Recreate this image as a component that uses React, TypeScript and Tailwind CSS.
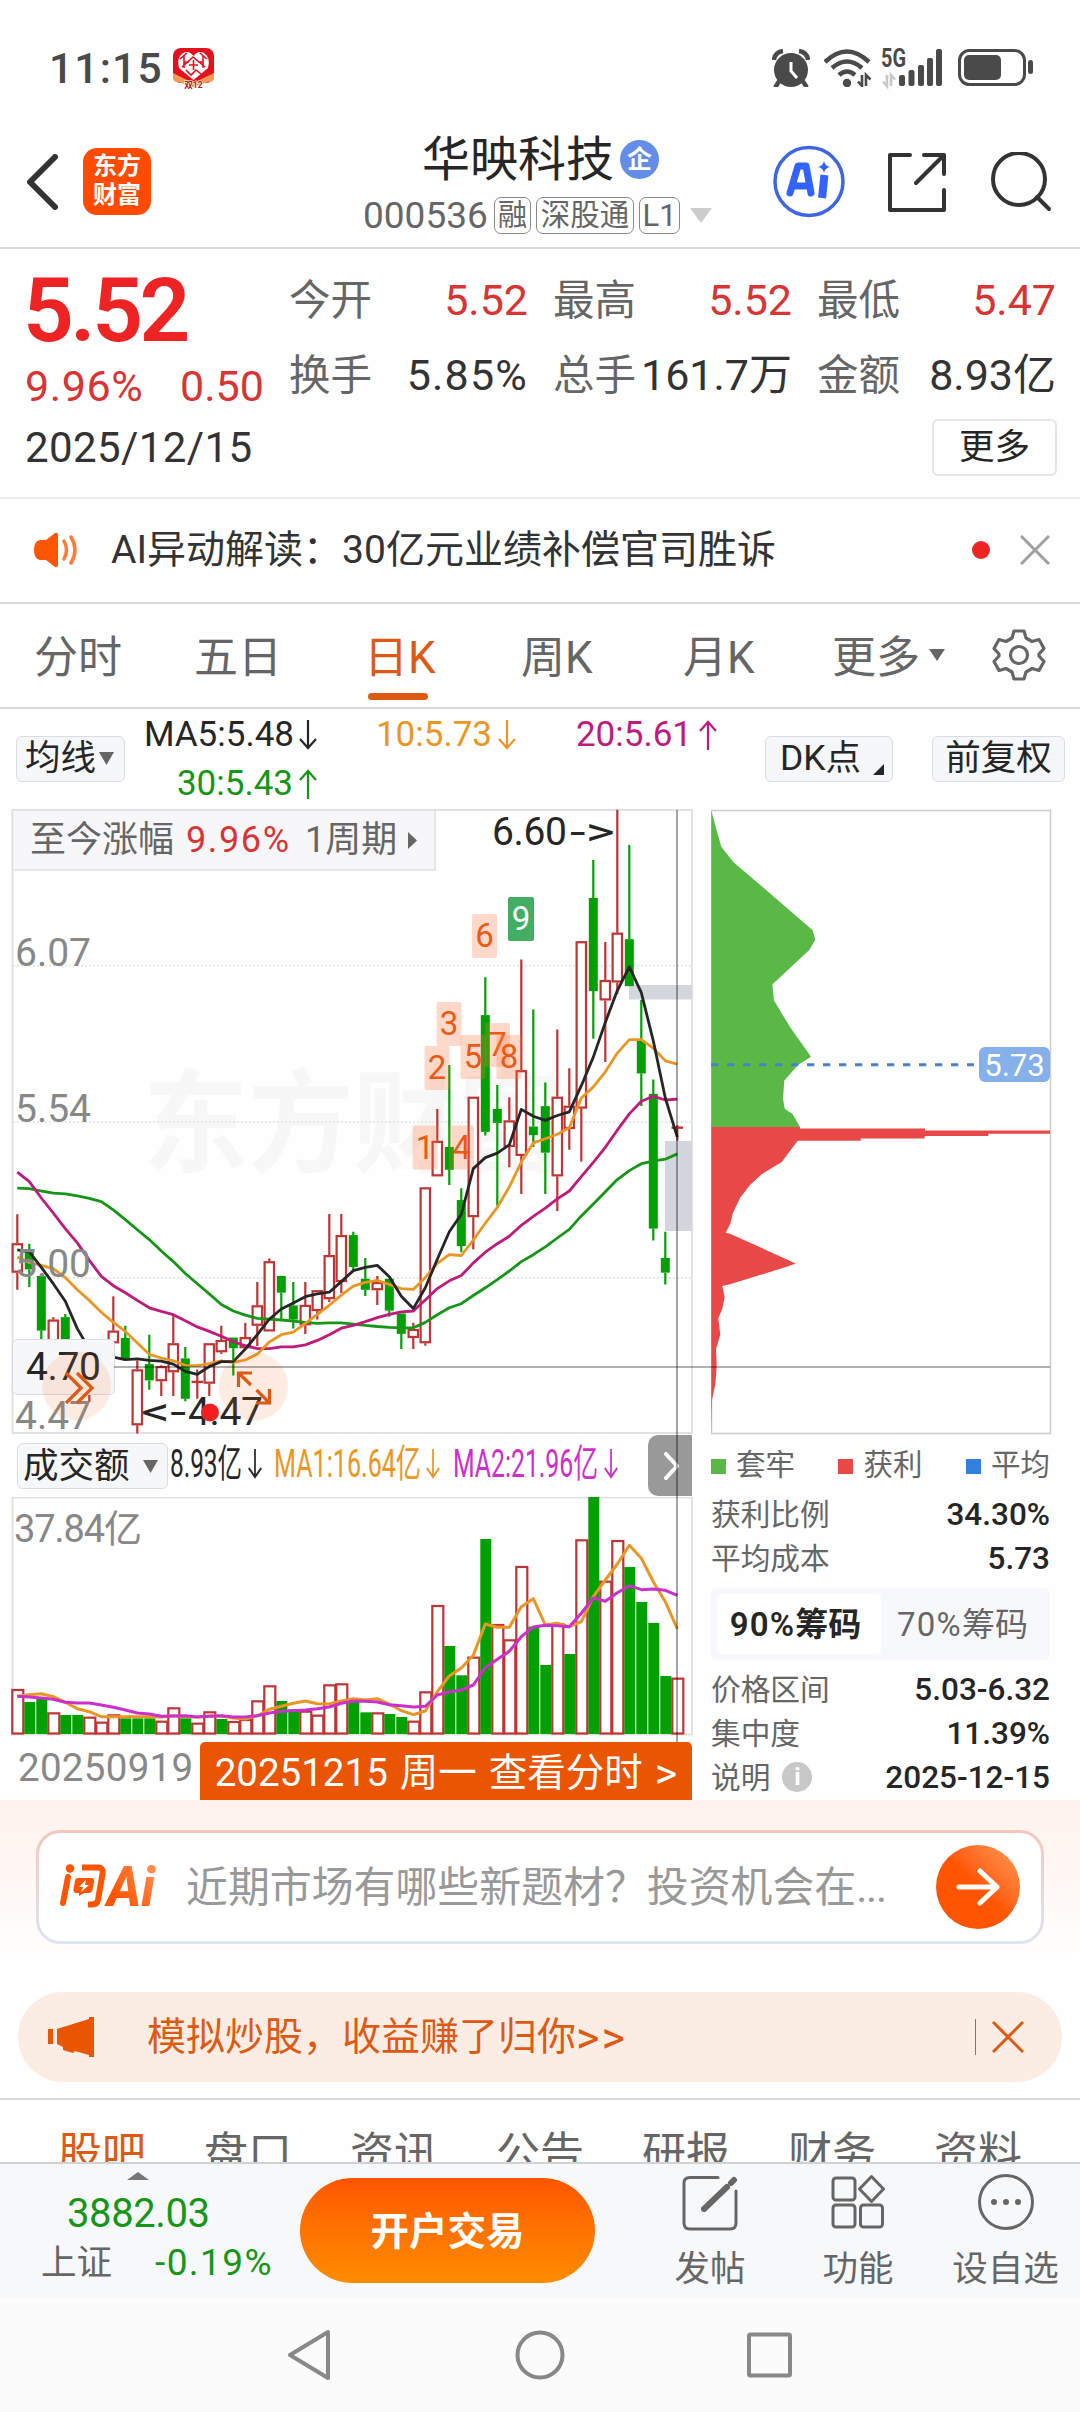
import React from 'react';

type Bar = [kind: 'r' | 'g', high: number, top: number, bottom: number, low: number];

const STEP = 12;
const FIRST = 17.3;
const xAt = (i: number) => FIRST + STEP * i;
// chart data is stored in fine-grained units, these bring it to pixels
const priceY = (v: number) => v / 2.45 - 8;
const volY = (v: number) => v / 3 - 67;
const chipX = (v: number) => v / 3 - 21;
const chipY = (v: number) => v / 2.119 - 108;

const candles: Bar[] = [
  ['r', 1015, 1086, 1158, 1200], ['g', 1087, 1104, 1150, 1193], ['g', 1166, 1166, 1300, 1325], ['r', 1267, 1273, 1335, 1335],
  ['g', 1259, 1267, 1345, 1360], ['g', 1345, 1360, 1400, 1440], ['r', 1350, 1380, 1440, 1475], ['g', 1345, 1360, 1400, 1430],
  ['r', 1216, 1300, 1331, 1331], ['g', 1288, 1318, 1368, 1372], ['r', 1374, 1395, 1532, 1552], ['g', 1310, 1382, 1422, 1445],
  ['r', 1385, 1387, 1424, 1460], ['r', 1262, 1331, 1402, 1460], ['g', 1340, 1368, 1467, 1473], ['r', 1395, 1423, 1423, 1467],
  ['r', 1331, 1331, 1430, 1460], ['r', 1288, 1323, 1353, 1357], ['g', 1317, 1317, 1343, 1410], ['r', 1281, 1316, 1343, 1343],
  ['r', 1181, 1238, 1288, 1338], ['r', 1123, 1130, 1302, 1302], ['g', 1166, 1166, 1207, 1275], ['g', 1181, 1238, 1273, 1295],
  ['r', 1181, 1237, 1287, 1308], ['r', 1201, 1201, 1252, 1273], ['r', 1014, 1115, 1223, 1230], ['r', 1014, 1066, 1181, 1208],
  ['g', 1058, 1066, 1144, 1152], ['g', 1122, 1173, 1200, 1215], ['r', 1166, 1181, 1201, 1237], ['g', 1173, 1173, 1251, 1266],
  ['g', 1258, 1258, 1308, 1345], ['r', 1281, 1296, 1318, 1345], ['r', 949, 949, 1331, 1337], ['r', 757, 835, 922, 922],
  ['g', 649, 850, 906, 943], ['g', 951, 980, 1093, 1108], ['r', 727, 727, 1022, 1101], ['g', 434, 527, 813, 822],
  ['g', 698, 757, 791, 994], ['r', 728, 785, 850, 900], ['r', 391, 662, 872, 965], ['g', 513, 800, 821, 850],
  ['g', 692, 750, 864, 965], ['r', 562, 727, 922, 1007], ['r', 657, 749, 806, 857], ['r', 346, 346, 756, 886],
  ['g', 147, 240, 468, 585], ['r', 348, 441, 491, 642], ['r', 24, 325, 447, 475], ['g', 110, 341, 456, 456],
  ['g', 490, 590, 670, 750], ['g', 685, 720, 1050, 1079], ['g', 1058, 1122, 1158, 1187], ['r', 797, 800, 800, 835],
];

const ma5 = [1102, 1107, 1145, 1185, 1228, 1295, 1345, 1355, 1365, 1371, 1369, 1373, 1375, 1382, 1400, 1407, 1388, 1376, 1376, 1345, 1310, 1272, 1247, 1232, 1217, 1210, 1206, 1180, 1153, 1145, 1140, 1168, 1216, 1246, 1195, 1125, 1058, 1015, 903, 876, 865, 845, 758, 775, 785, 773, 764, 700, 630, 545, 467, 409, 472, 590, 730, 826];
const ma10 = [1120, 1133, 1140, 1148, 1170, 1200, 1226, 1255, 1280, 1302, 1330, 1358, 1367, 1374, 1385, 1386, 1381, 1374, 1378, 1372, 1357, 1328, 1310, 1304, 1282, 1260, 1238, 1213, 1191, 1182, 1177, 1187, 1197, 1199, 1170, 1135, 1114, 1116, 1078, 1037, 998, 948, 887, 840, 830, 819, 803, 730, 703, 666, 620, 587, 587, 608, 639, 647];
const ma20 = [912, 935, 975, 1012, 1050, 1085, 1128, 1167, 1190, 1207, 1226, 1244, 1253, 1261, 1276, 1291, 1302, 1314, 1327, 1337, 1344, 1344, 1340, 1340, 1335, 1324, 1310, 1294, 1287, 1278, 1268, 1260, 1254, 1252, 1225, 1197, 1178, 1165, 1134, 1108, 1087, 1069, 1042, 1020, 1000, 977, 958, 923, 888, 851, 809, 769, 738, 726, 735, 733];
const ma30 = [951, 952, 958, 963, 965, 970, 976, 984, 1004, 1028, 1053, 1077, 1105, 1131, 1160, 1185, 1210, 1236, 1252, 1262, 1270, 1272, 1274, 1277, 1280, 1282, 1281, 1281, 1284, 1287, 1290, 1292, 1293, 1293, 1280, 1261, 1244, 1234, 1214, 1195, 1175, 1154, 1131, 1114, 1095, 1073, 1052, 1019, 990, 960, 930, 908, 891, 885, 880, 867];

const volumes = [777, 816, 804, 847, 855, 855, 860, 875, 853, 865, 865, 865, 872, 832, 865, 878, 844, 867, 873, 867, 811, 766, 813, 838, 842, 854, 763, 760, 813, 847, 847, 852, 861, 872, 784, 525, 648, 736, 680, 327, 582, 628, 408, 590, 705, 580, 672, 328, 201, 452, 330, 411, 516, 579, 738, 743];
const volumeKinds = 'rggrggrrrgggrrgrrgrrrrggrrrrggrggrrrggrgrrrggrgrgrrggggr';
const volMa1 = [799, 794, 791, 800, 817, 836, 845, 860, 860, 860, 860, 860, 861, 857, 860, 861, 858, 858, 864, 867, 857, 838, 829, 820, 813, 821, 822, 813, 806, 810, 806, 822, 842, 854, 843, 785, 738, 714, 676, 582, 592, 592, 530, 506, 585, 580, 590, 575, 500, 450, 402, 346, 385, 455, 515, 597];
const volMa2 = [799, 801, 804, 808, 817, 819, 819, 825, 832, 840, 849, 852, 859, 858, 857, 861, 859, 857, 861, 861, 857, 849, 844, 842, 840, 836, 831, 820, 813, 814, 816, 824, 827, 831, 829, 795, 785, 780, 765, 713, 688, 664, 620, 591, 586, 587, 590, 550, 504, 514, 488, 467, 479, 477, 481, 496];

const trapped = [[64, 235], [94, 311], [130, 343], [368, 488], [376, 508], [358, 530], [247, 603], [252, 637], [300, 693], [363, 756], [325, 773], [283, 806], [279, 845], [284, 866], [308, 878], [330, 905], [64, 905]];
const profit = [[64, 905], [330, 905], [330, 908], [705, 908], [705, 912], [1080, 912], [1080, 919], [895, 919], [895, 924], [704, 924], [704, 929], [512, 929], [512, 934], [323, 934], [275, 979], [215, 1005], [180, 1028], [150, 1055], [128, 1088], [121, 1110], [107, 1129], [120, 1131], [317, 1194], [290, 1201], [120, 1238], [97, 1242], [104, 1265], [97, 1290], [85, 1310], [91, 1345], [78, 1375], [80, 1412], [76, 1450], [66, 1483], [64, 1553]];

const line = (data: number[], toY: (v: number) => number) =>
  data.map((v, i) => `${xAt(i).toFixed(1)},${toY(v).toFixed(1)}`).join(' ');
const area = (pts: number[][]) => pts.map(([x, y]) => `${chipX(x).toFixed(1)},${chipY(y).toFixed(1)}`).join(' ');

const counts = [
  { n: '6', x: 472, y: 106 }, { n: '3', x: 436.5, y: 194 }, { n: '2', x: 424.5, y: 238 },
  { n: '5', x: 460.5, y: 227 }, { n: '7', x: 485, y: 215 }, { n: '8', x: 496.5, y: 227 },
  { n: '1', x: 412.5, y: 317.5 }, { n: '4', x: 449, y: 317.5 },
];

const Arrow: React.FC<{ up?: boolean; className?: string }> = ({ up, className = 'w-[18px]' }) => (
  <svg viewBox="0 0 18 30" preserveAspectRatio="none" className={`h-[30px] ${className}`} fill="none" stroke="currentColor" strokeWidth="2.2">
    <path d={up ? 'M9 30V2M1 11L9 2L17 11' : 'M9 0V28M1 19L9 28L17 19'} />
  </svg>
);

const StatusBar = () => (
  <div className="flex h-[112px] items-start justify-between pl-[49px] pr-[46px] pt-[48px] text-[#4a4a4a]">
    <div className="flex items-center">
      <span className="w-[124px] text-[42.5px] font-medium leading-[39px] tracking-[1.2px]">11:15</span>
      <svg width="41" height="41" viewBox="0 0 41 41" className="overflow-visible">
        <rect width="41" height="35" rx="8" fill="#e5101b" />
        <path d="M0 25L20 35L41 25V30Q41 34 35 34L20 39L5 34Q0 34 0 30Z" fill="#f59a55" />
        <path d="M20.500 32L6 20Q3 10 10 5Q16 2 20.500 8Q25 2 31 5Q38 10 35 20Z" fill="#fff" />
        <path d="M7 11L14 5M9 19L20 9L32 19M27 5L34 11M11 14H16M25 14H30M13 22L18 27L23 22L28 26M20.500 12V22M16 17H25M11 8V20M30 8V20" stroke="#e5101b" strokeWidth="1.600" fill="none" />
        <text x="20.500" y="40" textAnchor="middle" fontSize="8.500" fontWeight="700" fill="#b3131b" stroke="#fff" strokeWidth="1" paintOrder="stroke">双12</text>
      </svg>
    </div>
    <div className="flex items-start">
      <svg width="38" height="39" viewBox="0 0 38 39" fill="none" stroke="#4a4a4a">
        <circle cx="19" cy="22" r="17" fill="#4a4a4a" stroke="none" />
        <path d="M2 12Q3 4 11 3M36 12Q35 4 27 3" strokeWidth="4.500" />
        <path d="M8 32L4 38M30 32L34 38" strokeWidth="4.500" strokeLinecap="round" />
        <path d="M19 14V23L25 30" stroke="#fff" strokeWidth="3" />
      </svg>
      <svg width="49" height="39" viewBox="0 0 49 39" fill="none" stroke="#4a4a4a" strokeWidth="4.500" className="ml-[14px]">
        <path d="M1 14Q23 -7 45 14M8 20Q23 7 38 20M15 27Q23 20 31 27" />
        <circle cx="23" cy="35" r="4.200" fill="#4a4a4a" stroke="none" />
        <path d="M38 27V38L34 33.500M42 38V27L46.500 31.500" strokeWidth="2.600" />
      </svg>
      <svg width="62" height="39" viewBox="0 0 62 39" className="ml-[8px] overflow-visible">
        <text x="0" y="19" fontSize="26" fontWeight="700" fill="#4a4a4a" textLength="25" lengthAdjust="spacingAndGlyphs">5G</text>
        <path d="M6 27V38L2 33.500M10 38V27L14 31.500" stroke="#c8c8c8" strokeWidth="2.600" fill="none" />
        <g fill="#4a4a4a">
          <rect x="18" y="27" width="6" height="11" rx="2" />
          <rect x="27.500" y="22" width="6" height="16" rx="2" />
          <rect x="37" y="17" width="6" height="21" rx="2" />
          <rect x="46" y="10" width="6" height="28" rx="2" />
          <rect x="55" y="1" width="6" height="37" rx="2" />
        </g>
      </svg>
      <svg width="76" height="39" viewBox="0 0 76 39" className="ml-[15px]">
        <rect x="1.500" y="2.500" width="65" height="34" rx="10" fill="none" stroke="#4a4a4a" strokeWidth="3" />
        <rect x="6" y="7" width="37" height="25" rx="5" fill="#4a4a4a" />
        <rect x="70" y="12" width="5" height="14" rx="2.500" fill="#4a4a4a" />
      </svg>
    </div>
  </div>
);

const Tag: React.FC<{ children: React.ReactNode; width: string }> = ({ children, width }) => (
  <span className={`flex h-[37px] shrink-0 items-center justify-center whitespace-nowrap rounded-[7px] border border-[#8a8a8a] text-[29.5px] leading-none ${width}`}>{children}</span>
);

const Header = () => (
  <div className="flex h-[137px] items-start border-b-2 border-[#d8d8d8] pl-[27px]">
    <svg width="32" height="56" viewBox="0 0 32 56" className="mt-[42px]" fill="none" stroke="#333" strokeWidth="6" strokeLinecap="round" strokeLinejoin="round">
      <path d="M28 3L3 28L28 53" />
    </svg>
    <div className="ml-[24px] mt-[36px] flex h-[67px] w-[68px] flex-col items-center justify-center rounded-[14px] bg-[#ff4b00] text-[24px] font-bold leading-[29px] text-white">
      <span>东方</span>
      <span>财富</span>
    </div>
    <div className="ml-[212px] mt-[20px] flex w-[352px] flex-col">
      <div className="flex h-[56px] items-center pl-[59px]">
        <span className="w-[192px] whitespace-nowrap text-[48px] leading-[56px] text-[#262626]">华映科技</span>
        <span className="ml-[6px] flex size-[39px] items-center justify-center rounded-full bg-[#648de8] text-[25px] font-bold leading-none text-white">企</span>
      </div>
      <div className="mt-[9px] flex h-[37px] items-center gap-[5px] text-[#666]">
        <span className="w-[126px] shrink-0 text-[37px] leading-[37px]">000536</span>
        <Tag width="w-[37px]">融</Tag>
        <Tag width="w-[98px]">深股通</Tag>
        <Tag width="w-[41px]"><span className="text-[31px]">L1</span></Tag>
        <svg width="22" height="15" viewBox="0 0 22 15" className="ml-[5px] shrink-0"><path d="M0 0H22L11 15Z" fill="#ccc" /></svg>
      </div>
    </div>
    <svg width="72" height="74" viewBox="0 0 72 74" className="ml-[58px] mt-[32px]">
      <circle cx="36" cy="37.500" r="34" fill="#fff" stroke="#3f66e0" strokeWidth="3.500" />
      <path d="M17 49L25 22H33L38 49M22 42H35" stroke="#3363ff" strokeWidth="7" fill="none" strokeLinecap="round" strokeLinejoin="round" />
      <path d="M51 35L49.500 50" stroke="#3363ff" strokeWidth="8" strokeLinecap="square" />
      <path d="M51 17Q52 22 57 23Q52 24 51 29Q50 24 45 23Q50 22 51 17Z" fill="#3363ff" />
    </svg>
    <svg width="60" height="62" viewBox="0 0 60 62" className="ml-[42px] mt-[39px]" fill="none" stroke="#333" strokeWidth="4" strokeLinecap="round" strokeLinejoin="round">
      <path d="M23 4H3V59H57V39M37 4H57V23M57 4L29 32" />
    </svg>
    <svg width="64" height="64" viewBox="0 0 64 64" className="ml-[42px] mt-[40px]" fill="none" stroke="#333" strokeWidth="4" strokeLinecap="round">
      <circle cx="30" cy="27" r="26" />
      <path d="M48 45L60 57" />
    </svg>
  </div>
);

const Quote: React.FC<{ label: string; value: string; up?: boolean; className?: string }> = ({ label, value, up, className = '' }) => (
  <div className="flex h-[50px] w-[239px] items-center justify-between">
    <span className="whitespace-nowrap text-[41.5px] leading-none text-[#666]">{label}</span>
    <span className={`whitespace-nowrap text-[43px] leading-none ${up ? 'text-[#d93434]' : 'text-[#333]'} ${className}`}>{value}</span>
  </div>
);

const QuotePanel = () => (
  <div className="h-[250px] border-b-2 border-[#ebebeb] pl-[25px] pr-[23px]">
    <div className="flex">
      <div className="w-[264px] pt-[23px]">
        <div className="-ml-[2px] h-[78px] text-[89px] font-semibold leading-[78px] tracking-[-3.5px] text-[#ee2424]">5.52</div>
        <div className="mt-[11px] flex h-[50px] items-center text-[43px] leading-[50px] text-[#d93434]">
          <span className="w-[155px] tracking-[0.6px]">9.96%</span>
          <span>0.50</span>
        </div>
      </div>
      <div className="grid grid-cols-[239px_239px_239px] content-start gap-x-[25px] gap-y-[25px] pt-[27px]">
        <Quote label="今开" value="5.52" up />
        <Quote label="最高" value="5.52" up />
        <Quote label="最低" value="5.47" up />
        <Quote label="换手" value="5.85%" className="tracking-[1.2px]" />
        <Quote label="总手" value="161.7万" />
        <Quote label="金额" value="8.93亿" />
      </div>
    </div>
    <div className="mt-[8px] flex h-[58px] items-center justify-between">
      <span className="text-[42px] leading-none tracking-[0.4px] text-[#333]">2025/12/15</span>
      <span className="flex h-[57px] w-[125px] items-center justify-center rounded-[6px] border-2 border-[#e6e6e6] text-[35.5px] leading-none text-[#262626]">更多</span>
    </div>
  </div>
);

const Notice = () => (
  <div className="flex h-[105px] items-center border-b-2 border-[#d8d8d8] pl-[34px] pr-[30px]">
    <svg width="44" height="36" viewBox="0 0 44 36">
      <path d="M6 8H12L21 1Q24 0 24 4V32Q24 36 21 35L12 28H6Q0 27 0 18Q0 9 6 8Z" fill="#ff5500" />
      <path d="M30 9Q35 18 30 27M37 5Q45 18 37 31" stroke="#ff7a38" strokeWidth="3.500" fill="none" strokeLinecap="round" />
    </svg>
    <span className="ml-[33px] pt-[1px] text-[39px] leading-none text-[#333]">AI异动解读：30亿元业绩补偿官司胜诉</span>
    <span className="ml-auto size-[18px] rounded-full bg-[#ee2424]" />
    <svg width="30" height="30" viewBox="0 0 30 30" className="ml-[30px]" stroke="#a0a0a0" strokeWidth="3"><path d="M1 1L29 29M29 1L1 29" /></svg>
  </div>
);

const PeriodTabs = () => (
  <div className="flex h-[105px] items-center border-b-2 border-[#d8d8d8] pl-[34px] text-[44px] leading-none text-[#666]">
    <span className="w-[160px] pt-[5px]">分时</span>
    <span className="w-[170px] pt-[5px]">五日</span>
    <span className="relative w-[157px] pt-[5px] text-[#dc5a14]">
      日K
      <span className="absolute left-[4px] top-[62px] h-[7px] w-[60px] rounded-full bg-[#dc5a14]" />
    </span>
    <span className="w-[162px] pt-[5px]">周K</span>
    <span className="w-[149px] pt-[5px]">月K</span>
    <span className="pt-[5px]">更多</span>
    <svg width="16" height="12" viewBox="0 0 16 12" className="ml-[9px]"><path d="M0 0H16L8 12Z" fill="#666" /></svg>
    <svg width="54" height="54" viewBox="0 0 54 54" className="ml-[47px]" fill="none" stroke="#666" strokeWidth="3.200" strokeLinejoin="round">
      <path d="M22 3H32L34 10L40 13.500L47 11.500L52 20.500L47 26V28L52 33.500L47 42.500L40 40.500L34 44L32 51H22L20 44L14 40.500L7 42.500L2 33.500L7 28V26L2 20.500L7 11.500L14 13.500L20 10Z" />
      <circle cx="27" cy="27" r="8.500" />
    </svg>
  </div>
);

const pill = 'flex h-[46px] items-center whitespace-nowrap rounded-[6px] border border-[#d9dce2] bg-[#f6f7f9] text-[35.5px] leading-none text-[#262626]';

const IndicatorRow = () => (
  <div className="flex h-[100px] items-start pl-[16px]">
    <div className={`${pill} mt-[27px] w-[109px] pl-[8px]`}>
      均线
      <svg width="15" height="13" viewBox="0 0 15 13" className="ml-[3px]"><path d="M0 0H15L7.500 13Z" fill="#666" /></svg>
    </div>
    <div className="ml-[17px] grid grid-cols-[175px_199px_201px] gap-y-[1px] pt-[2px] text-[35px] leading-[48px]">
      <span className="flex items-center justify-end gap-[5px] text-[#262626]">MA5:5.48<Arrow /></span>
      <span className="flex items-center justify-end gap-[6px] text-[#eb9623]">10:5.73<Arrow /></span>
      <span className="flex items-center justify-end gap-[7px] text-[#bf1a7c]">20:5.61<Arrow up /></span>
      <span className="flex items-center justify-end gap-[6px] text-[#169616]">30:5.43<Arrow up /></span>
    </div>
    <div className={`${pill} ml-[48px] mt-[27px] w-[128px] pl-[14px]`}>
      DK点
      <svg width="11" height="11" viewBox="0 0 11 11" className="ml-[12px] mt-[22px]"><path d="M11 0V11H0Z" fill="#262626" /></svg>
    </div>
    <div className={`${pill} ml-[39px] mt-[27px] w-[133px] justify-center`}>前复权</div>
  </div>
);

const KLine = () => (
  <svg width="700" height="627" viewBox="0 0 700 627" className="block">
    <g fontSize="112" fontWeight="700" fill="#f7f7f7">
      <text x="143" y="356" textLength="420" lengthAdjust="spacingAndGlyphs">东方财富</text>
    </g>
    <g stroke="#e2e2e2" strokeWidth="1.500" strokeDasharray="2 2">
      <path d="M13 157.700H692M13 314H692M13 470H692" />
    </g>
    <path d="M12.500 2H692V625H12.500Z" fill="none" stroke="#e2e2e4" strokeWidth="2" />
    <rect x="629" y="177" width="63" height="14.500" fill="#d3d7dd" />
    <rect x="665" y="333" width="27" height="90" fill="#d3d7dd" />
    {candles.map(([kind, high, top, bottom, low], i) => {
      const x = xAt(i);
      const color = kind === 'r' ? '#bf3434' : '#02a002';
      return (
        <g key={i} stroke={color} strokeWidth="2.200">
          <path d={`M${x} ${priceY(high)}V${priceY(top)}M${x} ${priceY(bottom)}V${priceY(low)}`} />
          {kind === 'r' ? (
            <rect x={x - 4.7} y={priceY(top) + 1} width="9.400" height={Math.max(priceY(bottom) - priceY(top) - 2, 0.2)} fill="#fff" />
          ) : (
            <rect x={x - 4.5} y={priceY(top)} width="9" height={priceY(bottom) - priceY(top)} fill={color} stroke="none" />
          )}
        </g>
      );
    })}
    <g fontSize="33">
      {counts.map((c) => (
        <g key={c.n}>
          <rect x={c.x} y={c.y} width="25" height="44" rx="2" fill="#ff7b42" fillOpacity="0.28" />
          <text x={c.x + 12.5} y={c.y + 33} textAnchor="middle" fill="#ea5a14">{c.n}</text>
        </g>
      ))}
      <rect x="508" y="89" width="26" height="44" rx="2" fill="#41ae64" />
      <text x="521" y="122" textAnchor="middle" fill="#fff">9</text>
    </g>
    <g fill="none" strokeWidth="2.800" strokeLinejoin="round">
      <polyline points={line(ma30, priceY)} stroke="#169616" />
      <polyline points={line(ma20, priceY)} stroke="#bf1a7c" />
      <polyline points={line(ma10, priceY)} stroke="#eb9623" />
      <polyline points={line(ma5, priceY)} stroke="#262626" />
    </g>
    <g fontSize="39" fill="#888">
      <text x="15" y="157.500" textLength="76">6.07</text>
      <text x="15" y="313.500" textLength="76">5.54</text>
      <text x="15" y="469" textLength="76">5.00</text>
      <text x="15" y="621" textLength="76">4.47</text>
    </g>
    <rect x="12.500" y="531.500" width="102" height="55" rx="5" fill="#f6f7f9" stroke="#d9dce2" />
    <g fontSize="39" fill="#262626">
      <text x="26" y="571.500" textLength="75">4.70</text>
      <text x="492" y="37" textLength="75">6.60</text>
      <text x="570" y="37" textLength="45" lengthAdjust="spacingAndGlyphs">-&gt;</text>
      <text x="141" y="616.500" textLength="45" lengthAdjust="spacingAndGlyphs">&lt;-</text>
      <text x="188" y="616.500" textLength="75">4.47</text>
    </g>
    <circle cx="210" cy="604.500" r="9" fill="#f02020" />
    <circle cx="76.500" cy="578" r="34.500" fill="#ff6a1e" fillOpacity="0.13" />
    <circle cx="253.500" cy="578.500" r="34.500" fill="#ff6a1e" fillOpacity="0.13" />
    <g fill="none" stroke="#dc5a14" strokeWidth="3.200">
      <path d="M66 565L81 580L66 595M77 565L92 580L77 595" />
      <path d="M238.500 579V565H252M239 565.500L251 577M269.500 581V595H256M269 594.500L256.500 582" />
    </g>
    <path d="M12.500 2H435V62H12.500Z" fill="#f7f7fa" stroke="#dedfe3" strokeWidth="1.500" />
    <g fontSize="36" fill="#666">
      <text x="30" y="44">至今涨幅</text>
      <text x="186" y="43.500" fill="#d93434" textLength="103">9.96%</text>
      <text x="305" y="43.500">1周期</text>
      <path d="M408 24L417 32.500L408 41Z" />
    </g>
  </svg>
);

const ChipChart = () => (
  <svg width="342" height="627" viewBox="0 0 342 627" className="block">
    <path d="M0.500 2.500H339.500V625.500H0.500Z" fill="none" stroke="#ccc" strokeWidth="1.500" />
    <polygon points={area(trapped)} fill="#5ab946" />
    <polygon points={area(profit)} fill="#e84848" />
    <path d="M0 256.800H263" stroke="#4a80cc" strokeWidth="3" strokeDasharray="7.300 8.700" />
    <rect x="268" y="239" width="71" height="35" rx="6" fill="#86b0ea" />
    <text x="303.500" y="267.500" textAnchor="middle" fontSize="31" fill="#fff">5.73</text>
  </svg>
);

const Squeezed: React.FC<{ text: string; box: string; color: string }> = ({ text, box, color }) => (
  <span className={`flex h-[46px] items-center ${color} ${box}`}>
    <svg height="46" width="100%" className="overflow-visible">
      <text x="0" y="36" fontSize="39" fill="currentColor" textLength="100%" lengthAdjust="spacingAndGlyphs">{text}</text>
    </svg>
  </span>
);

const VolumeHeader = () => (
  <div className="flex h-[62px] items-start pl-[17px]">
    <div className={`${pill} mt-[8px] w-[151px] pl-[5px]`}>
      成交额
      <svg width="15" height="13" viewBox="0 0 15 13" className="ml-[13px]"><path d="M0 0H15L7.500 13Z" fill="#666" /></svg>
    </div>
    <div className="ml-[2px] flex items-center pt-[6px]">
      <Squeezed text="8.93亿" box="w-[72px]" color="text-[#262626]" />
      <span className="ml-[6px] w-[26px] text-[#262626]"><Arrow className="w-[14px]" /></span>
      <Squeezed text="MA1:16.64亿" box="w-[147px]" color="text-[#eb9623]" />
      <span className="ml-[5px] w-[27px] text-[#eb9623]"><Arrow className="w-[14px]" /></span>
      <Squeezed text="MA2:21.96亿" box="w-[145px]" color="text-[#cc30cc]" />
      <span className="ml-[6px] w-[30px] text-[#cc30cc]"><Arrow className="w-[14px]" /></span>
    </div>
    <div className="ml-auto flex h-[61px] w-[44px] items-center justify-center rounded-l-[10px] bg-[#999]">
      <svg width="16" height="28" viewBox="0 0 16 28" className="ml-[4px]" fill="none" stroke="#fff" strokeWidth="4" strokeLinecap="round" strokeLinejoin="round"><path d="M2 2L13 14L2 26" /></svg>
    </div>
  </div>
);

const VolumeChart = () => (
  <svg width="700" height="245" viewBox="0 0 700 245" className="block">
    <path d="M12.500 0.500H692V237.500H12.500Z" fill="none" stroke="#e2e2e4" strokeWidth="2" />
    {volumes.map((v, i) =>
      volumeKinds[i] === 'r' ? (
        <rect key={i} x={xAt(i) - 5} y={volY(v) + 1} width="11" height={235.5 - volY(v)} fill="#fff" stroke="#bf3434" strokeWidth="2.200" />
      ) : (
        <rect key={i} x={xAt(i) - 5} y={volY(v)} width="11" height={237 - volY(v)} fill="#02a002" />
      )
    )}
    <g fill="none" strokeWidth="3" strokeLinejoin="round">
      <polyline points={line(volMa1, volY)} stroke="#eb9623" />
      <polyline points={line(volMa2, volY)} stroke="#cc30cc" />
    </g>
    <text x="14" y="45" fontSize="38" fill="#888" textLength="128">37.84亿</text>
  </svg>
);

const DateRow = () => (
  <div className="flex h-[58px] justify-between pl-[18px]">
    <span className="text-[38.5px] leading-[52px] tracking-[0.3px] text-[#888]">20250919</span>
    <span className="flex w-[492px] items-center justify-center gap-[12px] rounded-t-[5px] bg-[#ea5504] pt-[4px] text-[38.5px] leading-none text-white">
      <span>20251215</span>
      <span>周一</span>
      <span>查看分时</span>
      <span className="text-[43px]">&gt;</span>
    </span>
  </div>
);

const ChipRow: React.FC<{ label: string; value: string; info?: boolean }> = ({ label, value, info }) => (
  <div className="flex h-[44px] items-center leading-none">
    <span className="text-[29.7px] text-[#666]">{label}</span>
    {info && (
      <span className="ml-[12px] flex size-[30px] items-center justify-center rounded-full bg-[#c8c8c8] text-[24px] font-bold text-white">i</span>
    )}
    <span className="ml-auto text-[31.500px] font-medium text-[#262626]">{value}</span>
  </div>
);

const Legend: React.FC<{ color: string; text: string }> = ({ color, text }) => (
  <span className="flex items-center gap-[10px]">
    <i className={`mt-[2px] size-[15px] ${color}`} />
    {text}
  </span>
);

const ChipStats = () => (
  <div className="w-[339px]">
    <div className="flex h-[57px] items-center justify-between pt-[3px] text-[29.5px] leading-none text-[#666]">
      <Legend color="bg-[#5ab946]" text="套牢" />
      <Legend color="bg-[#e84848]" text="获利" />
      <Legend color="bg-[#3480e0]" text="平均" />
    </div>
    <ChipRow label="获利比例" value="34.30%" />
    <ChipRow label="平均成本" value="5.73" />
    <div className="mb-[7px] mt-[8px] flex h-[72px] items-center rounded-[6px] bg-[#f7f8fb] p-[6px] text-[33px] leading-none">
      <span className="flex h-[60px] w-[164px] items-center justify-center rounded-[5px] bg-white pr-[7px] font-semibold text-[#262626]"><span className="tracking-[1.2px]">90%</span>筹码</span>
      <span className="flex flex-1 justify-center text-[#666]"><span className="tracking-[1.2px]">70%</span>筹码</span>
    </div>
    <ChipRow label="价格区间" value="5.03-6.32" />
    <ChipRow label="集中度" value="11.39%" />
    <ChipRow label="说明" value="2025-12-15" info />
  </div>
);

const ChartArea = () => (
  <div className="relative flex h-[992px] gap-[11px]">
    <div className="w-[700px]">
      <KLine />
      <div className="w-[692px]"><VolumeHeader /></div>
      <VolumeChart />
      <div className="w-[692px]"><DateRow /></div>
    </div>
    <div>
      <ChipChart />
      <ChipStats />
    </div>
    {/* crosshair */}
    <div className="absolute left-[114px] top-[558px] h-[2px] w-[936px] bg-black/30" />
    <div className="absolute left-[676px] top-[2px] h-[932px] w-[2px] bg-black/35" />
  </div>
);

const AskBar = () => (
  <div className="h-[192px] bg-gradient-to-b from-[#fff2ed] to-white to-90% px-[36px] pt-[30px]">
    <div className="rounded-[24px] bg-gradient-to-b from-[#f5c6bd] to-[#dce5f2] p-[3px]">
      <div className="flex h-[108px] items-center rounded-[21px] bg-white pl-[20px] pr-[21px]">
        <svg width="100" height="46" viewBox="0 0 100 46" className="overflow-visible">
          <defs>
            <linearGradient id="ask" x1="0" y1="1" x2="1" y2="0">
              <stop offset="0.300" stopColor="#ff5500" />
              <stop offset="1" stopColor="#ff9a60" />
            </linearGradient>
          </defs>
          <g fill="none" stroke="#ff5500" strokeWidth="6" strokeLinecap="round" strokeLinejoin="round">
            <path d="M9 13L4 39" />
            <path d="M23 3.500H39Q44.500 3.500 43.500 10L39 36Q38 41 32 40.500H29" strokeLinecap="butt" />
          </g>
          <circle cx="11" cy="4.500" r="4.200" fill="#ff5500" />
          <path d="M19 14H32Q36 14 35 18L33.500 26Q33 29 29 29H25L20 32V29H17Q14 29 14.500 25L16 17Q16 14 19 14Z" fill="#ff5500" />
          <path d="M27 15.500L20 23H24L22 28L30 21H26Z" fill="#fff" />
          <text x="48" y="42" fontSize="56" fontWeight="800" fontStyle="italic" fill="url(#ask)" textLength="48" lengthAdjust="spacingAndGlyphs">Ai</text>
        </svg>
        <span className="ml-[27px] pt-[1px] text-[41.9px] leading-none text-[#999]">近期市场有哪些新题材？投资机会在<span className="tracking-[-1.2px]">...</span></span>
        <span className="ml-auto flex size-[84px] items-center justify-center rounded-full bg-gradient-to-tr from-[#ff5500] from-50% to-[#ff9a50]">
          <svg width="44" height="40" viewBox="0 0 44 40" fill="none" stroke="#fff" strokeWidth="5" strokeLinecap="round" strokeLinejoin="round"><path d="M3 20H41M24 4L41 20L24 36" /></svg>
        </span>
      </div>
    </div>
  </div>
);

const Promo = () => (
  <div className="mx-[18px] flex h-[90px] items-center rounded-[45px] bg-[#fcede4] pl-[30px] pr-[38px] text-[#dc5a14]">
    <svg width="46" height="40" viewBox="0 0 46 40" fill="#ea5504">
      <path d="M0 12H5V27H0ZM9 12L41 2V0H46V40H41V38L27 34L25 36L15 33V30L9 27Z" />
    </svg>
    <span className="ml-[53px] flex items-center text-[39px] leading-none">模拟炒股，收益赚了归你<span className="text-[45px] tracking-[2px]">&gt;&gt;</span></span>
    <span className="ml-auto h-[36px] w-[1.500px] bg-[#dc5a14]" />
    <svg width="32" height="32" viewBox="0 0 32 32" className="ml-[16px]" stroke="#dc5a14" strokeWidth="3"><path d="M1 1L31 31M31 1L1 31" /></svg>
  </div>
);

const SectionTabs = () => (
  <div className="mt-[16px] flex h-[64px] overflow-hidden border-t-2 border-[#d8d8d8] pl-[58px] text-[44px] leading-[64px] text-[#666]">
    <span className="w-[146px] shrink-0 pt-[22px] text-[#dc5a14]">股吧</span>
    {['盘口', '资讯', '公告', '研报', '财务', '资料'].map((t) => (
      <span key={t} className="w-[146px] shrink-0 pt-[22px]">{t}</span>
    ))}
  </div>
);

const BottomBar = () => (
  <div className="flex h-[136px] items-start border-t-2 border-[#d0d2d6] bg-[#f7f8fa]">
    <div className="flex w-[300px] flex-col pt-[8px] leading-none">
      <svg width="22" height="8" viewBox="0 0 22 8" className="ml-[127px]"><path d="M0 8L11 0L22 8Z" fill="#777" /></svg>
      <span className="mt-[12px] pl-[67px] text-[40px] leading-[44px] tracking-[-0.4px] text-[#169616]">3882.03</span>
      <span className="mt-[7px] flex items-center pl-[41px] text-[35.500px] leading-[40px] text-[#666]">
        上证<span className="ml-[43px] text-[37px] tracking-[1.4px] text-[#169616]">-0.19%</span>
      </span>
    </div>
    <div className="mt-[14px] flex h-[105px] w-[295px] items-center justify-center rounded-full bg-gradient-to-b from-[#ff5500] to-[#ff8c00] pt-[3px] text-[38.500px] font-bold leading-none text-white">开户交易</div>
    <div className="ml-[42px] flex text-[35.500px] leading-none text-[#666]">
      <div className="flex w-[146px] flex-col items-center pt-[11px]">
        <svg width="56" height="56" viewBox="0 0 56 56" fill="none" stroke="#666" strokeWidth="3" strokeLinecap="round">
          <path d="M36 2.500H8Q2 2.500 2 8V48Q2 54 8 54H48Q54 54 54 48V16" />
          <path d="M22 34L45 12" strokeWidth="6" />
          <path d="M49 8L52 5" strokeWidth="6" />
        </svg>
        <span className="mt-[21px]">发帖</span>
      </div>
      <div className="flex w-[150px] flex-col items-center pt-[10px]">
        <svg width="54" height="56" viewBox="0 0 54 56" fill="none" stroke="#666" strokeWidth="3" strokeLinejoin="round">
          <rect x="2" y="4" width="22" height="22" rx="3" />
          <rect x="2" y="31" width="22" height="22" rx="3" />
          <rect x="29.500" y="31" width="22" height="22" rx="3" />
          <path d="M40.500 2.500L52.500 15L40.500 27.500L28.500 15Z" />
        </svg>
        <span className="mt-[22px]">功能</span>
      </div>
      <div className="flex w-[145px] flex-col items-center pt-[10px]">
        <svg width="58" height="56" viewBox="0 0 58 56" fill="#666">
          <circle cx="29" cy="28" r="26.500" fill="none" stroke="#666" strokeWidth="3" />
          <circle cx="17" cy="28" r="3" />
          <circle cx="29" cy="28" r="3" />
          <circle cx="41" cy="28" r="3" />
        </svg>
        <span className="mt-[22px]">设自选</span>
      </div>
    </div>
  </div>
);

const SystemNav = () => (
  <div className="flex h-[114px] items-center bg-[#fbfbfb] pl-[286px]">
    <svg width="46" height="54" viewBox="0 0 46 54" fill="none" stroke="#888" strokeWidth="4" strokeLinejoin="round"><path d="M42 4V50L4 27Z" /></svg>
    <svg width="52" height="52" viewBox="0 0 52 52" className="ml-[182px]" fill="none" stroke="#888" strokeWidth="4"><circle cx="26" cy="26" r="22.500" /></svg>
    <svg width="46" height="46" viewBox="0 0 46 46" className="ml-[180px]" fill="none" stroke="#888" strokeWidth="4"><rect x="3" y="2.500" width="41" height="41" rx="1.500" /></svg>
  </div>
);

export default function App() {
  return (
    <div className="flex h-[2412px] w-[1080px] flex-col overflow-hidden bg-[#fefefe] font-[Roboto,'Noto_Sans_CJK_SC',sans-serif]">
      <StatusBar />
      <Header />
      <QuotePanel />
      <Notice />
      <PeriodTabs />
      <IndicatorRow />
      <ChartArea />
      <AskBar />
      <Promo />
      <SectionTabs />
      <BottomBar />
      <SystemNav />
    </div>
  );
}
